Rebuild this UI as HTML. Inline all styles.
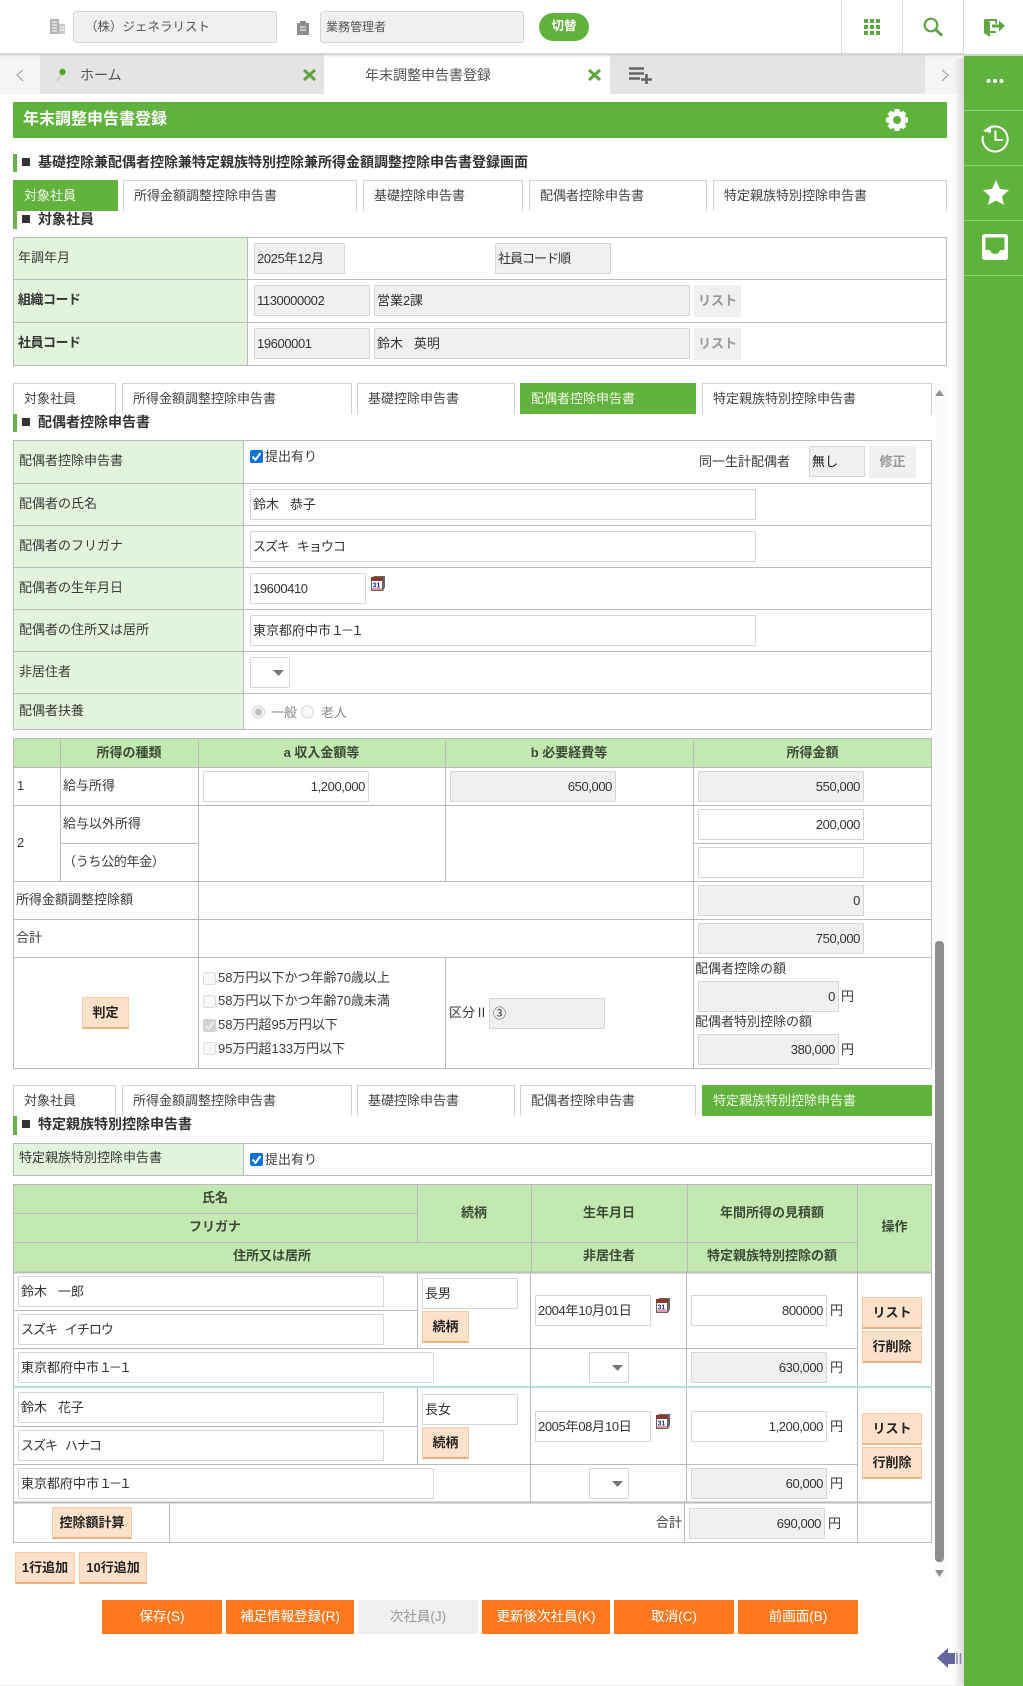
<!DOCTYPE html>
<html lang="ja">
<head>
<meta charset="utf-8">
<title>年末調整申告書登録</title>
<style>
html,body{margin:0;padding:0;background:#fff}
body{position:relative;width:1023px;height:1686px;overflow:hidden;font-family:"Liberation Sans","Noto Sans CJK JP",sans-serif;font-size:13px;color:#3a3a3a}
svg.bg{position:absolute;left:0;top:0}
.t,.i,.b,.tb,.o{position:absolute;white-space:nowrap;box-sizing:border-box}
.t{line-height:20px}
.c{text-align:center}
.h{font-weight:bold;color:#3d4a36}
.s{font-weight:bold;color:#333;font-size:14px}
.k{font-weight:bold;color:#333;letter-spacing:-.5px}
.i{height:31px;line-height:30px;border:1px solid #d6d6d6;background:#fff;padding:0 2px;color:#333;border-radius:1px}
.g{background:#f0f0f0}
.r{text-align:right;padding-right:3px}
.d{font-style:normal;font-size:13px;letter-spacing:-.4px}
.q{letter-spacing:-1px}
.w{letter-spacing:-3px}
.b{height:32px;line-height:29px;text-align:center;background:#fde2c9;border:1px solid #f6cba6;border-bottom:2px solid #f2b27e;font-weight:bold;color:#222}
.x{height:32px;line-height:31px;text-align:center;background:#f0f0f0;font-weight:bold;color:#999}
.tb{height:31px;line-height:29px;border:1px solid #d2d2d2;border-bottom:0;background:#fff;color:#444}
.on{background:#62b33d;color:#f2fbe8;border-color:#62b33d}
.o{top:1600px;height:34px;line-height:33px;text-align:center;background:#ff781e;color:#fff;font-size:13.5px}
.n{background:#f0f0f0;color:#999}
</style>
</head>
<body>
<svg class="bg" width="1023" height="1686" viewBox="0 0 1023 1686" fill="none">
<defs>
<linearGradient id="sh" x1="0" x2="1" y1="0" y2="0"><stop offset="0" stop-color="#d9d9d9" stop-opacity="0"/><stop offset="1" stop-color="#d9d9d9"/></linearGradient>
<linearGradient id="hs" x1="0" x2="0" y1="0" y2="1"><stop offset="0" stop-color="#cfcfcf"/><stop offset="1" stop-color="#cfcfcf" stop-opacity="0"/></linearGradient>
</defs>
<!-- tabs background -->
<rect x="0" y="55" width="40" height="39" fill="#f5f5f5"/>
<rect x="40" y="55" width="284" height="39" fill="#e4e4e4"/>
<rect x="610" y="55" width="315" height="39" fill="#e4e4e4"/>
<rect x="925" y="55" width="39" height="39" fill="#f5f5f5"/>
<rect x="0" y="54" width="964" height="3" fill="url(#hs)"/>
<!-- sidebar -->
<rect x="954" y="58" width="10" height="1628" fill="url(#sh)"/>
<rect x="964" y="55" width="59" height="1631" fill="#5fb23b"/>
<rect x="964" y="54" width="59" height="2" fill="#c9d9c0"/>
<path d="M964 110.5H1023M964 165.5H1023M964 220.5H1023M964 275.5H1023" stroke="#8fcb73"/>
<rect x="0" y="1685" width="964" height="1" fill="#eee"/>
<!-- header lines -->
<path d="M841.5 0V54M902.5 0V54M963.5 0V54" stroke="#d9d9d9"/>
<rect x="0" y="53" width="964" height="1" fill="#d9d9d9"/>
<!-- header icons -->
<g fill="#b5b5b5"><rect x="50" y="19" width="9" height="15"/><rect x="59" y="24" width="6" height="10" fill="#c9c9c9"/></g>
<path d="M52 22h5M52 25h5M52 28h5M52 31h5M60 27h4M60 30h4" stroke="#fff"/>
<path d="M297 23h3v-2h6v2h3v12h-12z" fill="#8d8d8d"/><path d="M300 27h6M300 30h6" stroke="#fff"/>
<g fill="#5fa544"><rect x="864" y="19" width="4" height="4"/><rect x="870" y="19" width="4" height="4"/><rect x="876" y="19" width="4" height="4"/><rect x="864" y="25" width="4" height="4"/><rect x="870" y="25" width="4" height="4"/><rect x="876" y="25" width="4" height="4"/><rect x="864" y="31" width="4" height="4"/><rect x="870" y="31" width="4" height="4"/><rect x="876" y="31" width="4" height="4"/></g>
<circle cx="931" cy="25" r="6.3" stroke="#5fa544" stroke-width="2.2"/><path d="M935.5 29.5L942 35.5" stroke="#5fa544" stroke-width="3"/>
<path d="M984 19L990 22V37L984 33Z" fill="#5fa544"/><path d="M985 19H997V23.5H995V21H987ZM990 31H996V33H990Z" fill="#5fa544"/><path d="M992 24.500H999V20.500L1005 26L999 31.500V27.500H992Z" fill="#5fa544"/>
<!-- tab icons -->
<circle cx="62.500" cy="72" r="3.200" fill="#5aa52a"/><path d="M61 75L57 81" stroke="#c9c9c9" stroke-width="1.500"/>
<path d="M304 70L315 80M315 70L304 80" stroke="#5fa544" stroke-width="3"/>
<path d="M589 70L600 80M600 70L589 80" stroke="#5fa544" stroke-width="3"/>
<path d="M629 68.500H644M629 73.500H644M629 78.500H640" stroke="#666" stroke-width="2.400"/><path d="M641 79.500H652M646.500 74V84" stroke="#666" stroke-width="2.600"/>
<path d="M23 70L17 75L23 81" stroke="#999"/>
<path d="M942 70L948 75L942 81" stroke="#999"/>
<!-- green title -->
<rect x="13" y="102" width="934" height="36" fill="#5fb23b"/>
<g fill="#fff" transform="translate(897 120)"><circle r="6.500" fill="none" stroke="#fff" stroke-width="5"/><g><rect x="-2.500" y="-11" width="5" height="5"/><rect x="-2.500" y="6" width="5" height="5"/><rect x="-11" y="-2.500" width="5" height="5"/><rect x="6" y="-2.500" width="5" height="5"/></g><g transform="rotate(45)"><rect x="-2.500" y="-11" width="5" height="5"/><rect x="-2.500" y="6" width="5" height="5"/><rect x="-11" y="-2.500" width="5" height="5"/><rect x="6" y="-2.500" width="5" height="5"/></g></g>
<!-- sidebar icons -->
<g fill="#fff"><circle cx="988.500" cy="81" r="2"/><circle cx="995" cy="81" r="2"/><circle cx="1001.500" cy="81" r="2"/></g>
<path d="M987 129.500A12.500 12.500 0 1 1 983 136" stroke="#fff" stroke-width="2"/><path d="M983 131L991 125.500V133Z" fill="#fff"/><path d="M995.500 130.500V140H1003" stroke="#fff" stroke-width="2"/>
<path d="M996 180L1000 189L1009 190L1002 196.500L1004 205L996 200.500L988 205L990 196.500L983 190L992 189Z" fill="#fff"/>
<path d="M985 234H1005Q1008 234 1008 237V257Q1008 260 1005 260H985Q982 260 982 257V237Q982 234 985 234ZM985.500 237.500V250H990Q991 254 995 254Q999 254 1000 250H1004.500V237.500Z" fill="#fff" fill-rule="evenodd"/>
<!-- heading bars -->
<g fill="#6db14e"><rect x="13" y="154" width="4" height="18"/><rect x="13" y="211" width="4" height="18"/><rect x="13" y="414" width="4" height="18"/><rect x="13" y="1116" width="4" height="19"/></g>
<g fill="#333"><rect x="22" y="158" width="8" height="8"/><rect x="22" y="215" width="8" height="8"/><rect x="22" y="418" width="8" height="8"/><rect x="22" y="1120" width="8" height="8"/></g>
<!-- fills -->
<g fill="#e2f4dc"><rect x="14" y="238" width="233" height="127"/><rect x="14" y="441" width="229" height="288"/><rect x="14" y="1144" width="229" height="31"/></g>
<g fill="#c2eab0"><rect x="14" y="739" width="918" height="28"/><rect x="14" y="1185" width="918" height="87"/></g>
<!-- grid lines -->
<g stroke="#bbb" shape-rendering="crispEdges">
<path d="M13.500 237.500H946.500V365.500H13.500ZM13 279.500H947M13 322.500H947M247.500 237V365"/>
<path d="M13.500 440.500H931.500V729.500H13.500ZM13 483.500H932M13 525.500H932M13 567.500H932M13 609.500H932M13 651.500H932M13 693.500H932M243.500 440V729"/>
<path d="M13.500 738.500H931.500V1068.500H13.500ZM13 767.500H932M13 805.500H932M60 843.500H198M693 843.500H932M13 881.500H932M13 919.500H932M13 957.500H932M60.500 738V881M198.500 738V1068M445.500 738V881M445.500 957V1068M693.500 738V1068"/>
<path d="M13.500 1143.500H931.500V1175.500H13.500ZM243.500 1143V1175"/>
<path d="M13.500 1184.500H931.500V1542.500H13.500ZM13 1213.500H417M13 1242.500H857M417.500 1184V1242M531.500 1184V1272M687.500 1184V1272M857.500 1184V1542"/>
<path d="M417.500 1273V1348M530.500 1273V1386M686.500 1273V1386M13 1310.500H417M13 1348.500H857"/>
<path d="M417.500 1388V1464M530.500 1388V1502M686.500 1388V1502M13 1426.500H417M13 1464.500H857"/>
<path d="M169.500 1503V1542M684.500 1503V1542"/>
<path d="M13 1272.500H932M13 1502.500H932" stroke-width="2"/>
</g>
<rect x="13" y="1386" width="919" height="2" fill="#b7dfe0"/>
<!-- scrollbar -->
<rect x="935" y="383" width="12" height="1202" fill="#fbfbfb"/>
<path d="M935 396L939.500 390L944 396Z" fill="#8e8e8e"/>
<rect x="935" y="941" width="9" height="621" rx="4" fill="#8e8e8e"/>
<path d="M935 1570H944L939.500 1577Z" fill="#8e8e8e"/>
<!-- back arrow -->
<path d="M937 1658L948 1648V1653H955V1664H948V1668Z" fill="#67679f"/><path d="M957 1653V1664M960.500 1653V1664" stroke="#8a8ab5" stroke-width="1.600"/>
<!-- checkboxes -->
<g>
<rect x="250" y="450" width="13" height="13" rx="2" fill="#0a72d8"/><path d="M252.500 456.500L255.500 459.800L260.500 453" stroke="#fff" stroke-width="2"/>
<rect x="250" y="1153" width="13" height="13" rx="2" fill="#0a72d8"/><path d="M252.500 1159.500L255.500 1162.800L260.500 1156" stroke="#fff" stroke-width="2"/>
<rect x="203.500" y="972.500" width="12" height="12" rx="2" fill="#f7f7f7" stroke="#ddd"/>
<rect x="203.500" y="995.500" width="12" height="12" rx="2" fill="#f7f7f7" stroke="#ddd"/>
<rect x="203" y="1019" width="13" height="13" rx="2" fill="#d2d2d2"/><path d="M205.500 1025.500L208.500 1028.800L213.500 1022" stroke="#eee" stroke-width="2"/>
<rect x="203.500" y="1042.500" width="12" height="12" rx="2" fill="#f7f7f7" stroke="#ddd"/>
<circle cx="258.500" cy="712" r="6" fill="#f3f3f3" stroke="#d4d4d4"/><circle cx="258.500" cy="712" r="3.500" fill="#bdbdbd"/>
<circle cx="307.500" cy="712" r="6" fill="#f8f8f8" stroke="#d4d4d4"/>
</g>
</svg>

<!-- header -->
<div class="i g" style="left:73px;top:11px;width:204px;height:32px;line-height:30px;padding-left:11px;border-radius:3px;color:#555;font-size:12.500px">（株）ジェネラリスト</div>
<div class="i g" style="left:320px;top:11px;width:204px;height:32px;line-height:30px;padding-left:5px;border-radius:3px;color:#555;font-size:12px">業務管理者</div>
<div class="t c" style="left:539px;top:13px;width:50px;height:28px;line-height:26px;background:#5fb23b;border-radius:14px;color:#fff;font-weight:bold;font-size:12.500px">切替</div>

<div class="t" style="left:80px;top:65px;color:#555;font-size:14px">ホーム</div>
<div class="t" style="left:365px;top:65px;color:#555;font-size:14px">年末調整申告書登録</div>

<div class="t" style="left:23px;top:109px;color:#fff;font-size:16px;line-height:22px;font-weight:bold">年末調整申告書登録</div>
<div class="t s" style="left:38px;top:152px">基礎控除兼配偶者控除兼特定親族特別控除兼所得金額調整控除申告書登録画面</div>

<!-- tabs 1 -->
<div class="tb on" style="left:13px;top:180px;width:105px;padding-left:10px">対象社員</div>
<div class="tb" style="left:123px;top:180px;width:234px;padding-left:10px">所得金額調整控除申告書</div>
<div class="tb" style="left:363px;top:180px;width:160px;padding-left:10px">基礎控除申告書</div>
<div class="tb" style="left:529px;top:180px;width:178px;padding-left:10px">配偶者控除申告書</div>
<div class="tb" style="left:713px;top:180px;width:234px;padding-left:10px">特定親族特別控除申告書</div>
<div class="t s" style="left:38px;top:209px">対象社員</div>

<!-- table 1 -->
<div class="t" style="left:18px;top:248px">年調年月</div>
<div class="t k" style="left:18px;top:290px">組織コード</div>
<div class="t k" style="left:18px;top:333px">社員コード</div>
<div class="i g" style="left:254px;top:243px;width:91px;"><i class="d">2025</i>年<i class="d">12</i>月</div>
<div class="i g q" style="left:495px;top:243px;width:116px">社員コード順</div>
<div class="i g" style="left:254px;top:285px;width:116px"><i class="d">1130000002</i></div>
<div class="i g" style="left:374px;top:285px;width:316px">営業<i class="d">2</i>課</div>
<div class="t x" style="left:694px;top:285px;width:47px;">リスト</div>
<div class="i g" style="left:254px;top:328px;width:116px"><i class="d">19600001</i></div>
<div class="i g" style="left:374px;top:328px;width:316px">鈴木&nbsp;&nbsp;&nbsp;英明</div>
<div class="t x" style="left:694px;top:328px;width:47px;">リスト</div>

<!-- tabs 2 -->
<div class="tb" style="left:13px;top:383px;width:103px;padding-left:10px">対象社員</div>
<div class="tb" style="left:122px;top:383px;width:230px;padding-left:10px">所得金額調整控除申告書</div>
<div class="tb" style="left:357px;top:383px;width:158px;padding-left:10px">基礎控除申告書</div>
<div class="tb on" style="left:520px;top:383px;width:176px;padding-left:10px">配偶者控除申告書</div>
<div class="tb" style="left:702px;top:383px;width:230px;padding-left:10px">特定親族特別控除申告書</div>
<div class="t s" style="left:38px;top:412px">配偶者控除申告書</div>

<!-- table 2 -->
<div class="t" style="left:19px;top:451px">配偶者控除申告書</div>
<div class="t" style="left:19px;top:494px">配偶者の氏名</div>
<div class="t" style="left:19px;top:536px">配偶者のフリガナ</div>
<div class="t" style="left:19px;top:578px">配偶者の生年月日</div>
<div class="t" style="left:19px;top:620px">配偶者の住所又は居所</div>
<div class="t" style="left:19px;top:662px">非居住者</div>
<div class="t" style="left:19px;top:701px">配偶者扶養</div>
<div class="t" style="left:265px;top:447px">提出有り</div>
<div class="t" style="left:699px;top:452px">同一生計配偶者</div>
<div class="i g" style="left:809px;top:446px;width:56px;color:#111">無し</div>
<div class="t x" style="left:869px;top:446px;width:47px;">修正</div>
<div class="i" style="left:250px;top:489px;width:506px">鈴木&nbsp;&nbsp;&nbsp;恭子</div>
<div class="i q" style="left:250px;top:531px;width:506px">スズキ&nbsp;&nbsp;&nbsp;キョウコ</div>
<div class="i" style="left:250px;top:573px;width:116px"><i class="d">19600410</i></div>
<svg style="position:absolute;left:371px;top:576px" width="15" height="16" viewBox="0 0 15 16"><path d="M0 3L3 0H14V11L12 15H0Z" fill="#666"/><rect x="0" y="1" width="12" height="4" fill="#8a3a2c"/><rect x="1" y="5" width="10" height="9" fill="#fff"/><text x="1.500" y="11.500" font-size="7" font-weight="bold" fill="#1a2fb0" font-family="Liberation Sans">31</text><rect x="1" y="12.500" width="10" height="1" fill="#d33"/></svg>
<div class="i" style="left:250px;top:615px;width:506px">東京都府中市<span class="w">１－１</span></div>
<div class="i" style="left:250px;top:657px;width:40px"></div>
<svg style="position:absolute;left:273px;top:670px" width="11" height="6"><path d="M0 0H11L5.500 6Z" fill="#777"/></svg>
<div class="t" style="left:271px;top:703px;color:#888">一般</div>
<div class="t" style="left:321px;top:703px;color:#888">老人</div>

<!-- table 3 -->
<div class="t c h" style="left:60px;top:743px;width:138px">所得の種類</div>
<div class="t c h" style="left:198px;top:743px;width:247px">a 収入金額等</div>
<div class="t c h" style="left:445px;top:743px;width:248px">b 必要経費等</div>
<div class="t c h" style="left:693px;top:743px;width:239px">所得金額</div>
<div class="t" style="left:17px;top:776px"><i class="d">1</i></div>
<div class="t" style="left:63px;top:776px">給与所得</div>
<div class="t" style="left:17px;top:833px"><i class="d">2</i></div>
<div class="t" style="left:63px;top:814px">給与以外所得</div>
<div class="t" style="left:63px;top:852px;letter-spacing:-.3px">（うち公的年金）</div>
<div class="t" style="left:16px;top:890px">所得金額調整控除額</div>
<div class="t" style="left:16px;top:928px">合計</div>
<div class="i r" style="left:203px;top:771px;width:166px"><i class="d">1,200,000</i></div>
<div class="i r g" style="left:450px;top:771px;width:166px"><i class="d">650,000</i></div>
<div class="i r g" style="left:698px;top:771px;width:166px"><i class="d">550,000</i></div>
<div class="i r" style="left:698px;top:809px;width:166px"><i class="d">200,000</i></div>
<div class="i r" style="left:698px;top:847px;width:166px"></div>
<div class="i r g" style="left:698px;top:885px;width:166px"><i class="d">0</i></div>
<div class="i r g" style="left:698px;top:923px;width:166px"><i class="d">750,000</i></div>
<div class="b" style="left:82px;top:997px;width:47px">判定</div>
<div class="t" style="left:218px;top:968px">58万円以下かつ年齢70歳以上</div>
<div class="t" style="left:218px;top:991px">58万円以下かつ年齢70歳未満</div>
<div class="t" style="left:218px;top:1015px">58万円超95万円以下</div>
<div class="t" style="left:218px;top:1039px">95万円超133万円以下</div>
<div class="t" style="left:449px;top:1003px">区分Ⅱ</div>
<div class="i g" style="left:489px;top:998px;width:116px;padding-left:3px">③</div>
<div class="t" style="left:695px;top:959px">配偶者控除の額</div>
<div class="i r g" style="left:698px;top:981px;width:141px"><i class="d">0</i></div>
<div class="t" style="left:841px;top:987px">円</div>
<div class="t" style="left:695px;top:1012px">配偶者特別控除の額</div>
<div class="i r g" style="left:698px;top:1034px;width:141px"><i class="d">380,000</i></div>
<div class="t" style="left:841px;top:1040px">円</div>

<!-- tabs 3 -->
<div class="tb" style="left:13px;top:1085px;width:103px;padding-left:10px">対象社員</div>
<div class="tb" style="left:122px;top:1085px;width:230px;padding-left:10px">所得金額調整控除申告書</div>
<div class="tb" style="left:357px;top:1085px;width:158px;padding-left:10px">基礎控除申告書</div>
<div class="tb" style="left:520px;top:1085px;width:176px;padding-left:10px">配偶者控除申告書</div>
<div class="tb on" style="left:702px;top:1085px;width:230px;padding-left:10px">特定親族特別控除申告書</div>
<div class="t s" style="left:38px;top:1114px">特定親族特別控除申告書</div>

<!-- table 4 -->
<div class="t" style="left:19px;top:1148px">特定親族特別控除申告書</div>
<div class="t" style="left:265px;top:1150px">提出有り</div>

<!-- table 5 header -->
<div class="t c h" style="left:13px;top:1188px;width:404px">氏名</div>
<div class="t c h" style="left:13px;top:1217px;width:404px">フリガナ</div>
<div class="t c h" style="left:13px;top:1246px;width:518px">住所又は居所</div>
<div class="t c h" style="left:417px;top:1203px;width:114px">続柄</div>
<div class="t c h" style="left:531px;top:1203px;width:156px">生年月日</div>
<div class="t c h" style="left:531px;top:1246px;width:156px">非居住者</div>
<div class="t c h" style="left:687px;top:1203px;width:170px">年間所得の見積額</div>
<div class="t c h" style="left:687px;top:1246px;width:170px">特定親族特別控除の額</div>
<div class="t c h" style="left:857px;top:1217px;width:75px">操作</div>

<!-- row 1 -->
<div class="i" style="left:18px;top:1276px;width:366px">鈴木&nbsp;&nbsp;&nbsp;一郎</div>
<div class="i q" style="left:18px;top:1314px;width:366px">スズキ&nbsp;&nbsp;&nbsp;イチロウ</div>
<div class="i" style="left:18px;top:1352px;width:416px">東京都府中市<span class="w">１－１</span></div>
<div class="i" style="left:422px;top:1278px;width:96px">長男</div>
<div class="b" style="left:422px;top:1311px;width:47px">続柄</div>
<div class="i" style="left:535px;top:1295px;width:116px"><i class="d">2004</i>年<i class="d">10</i>月<i class="d">01</i>日</div>
<svg style="position:absolute;left:656px;top:1298px" width="15" height="16" viewBox="0 0 15 16"><path d="M0 3L3 0H14V11L12 15H0Z" fill="#666"/><rect x="0" y="1" width="12" height="4" fill="#8a3a2c"/><rect x="1" y="5" width="10" height="9" fill="#fff"/><text x="1.500" y="11.500" font-size="7" font-weight="bold" fill="#1a2fb0" font-family="Liberation Sans">31</text><rect x="1" y="12.500" width="10" height="1" fill="#d33"/></svg>
<div class="i r" style="left:691px;top:1295px;width:136px"><i class="d">800000</i></div>
<div class="t" style="left:830px;top:1301px">円</div>
<div class="i" style="left:589px;top:1352px;width:40px"></div>
<svg style="position:absolute;left:612px;top:1365px" width="11" height="6"><path d="M0 0H11L5.500 6Z" fill="#777"/></svg>
<div class="i r g" style="left:691px;top:1352px;width:136px"><i class="d">630,000</i></div>
<div class="t" style="left:830px;top:1358px">円</div>
<div class="b" style="left:862px;top:1297px;width:60px">リスト</div>
<div class="b" style="left:862px;top:1331px;width:60px">行削除</div>

<!-- row 2 -->
<div class="i" style="left:18px;top:1392px;width:366px">鈴木&nbsp;&nbsp;&nbsp;花子</div>
<div class="i q" style="left:18px;top:1430px;width:366px">スズキ&nbsp;&nbsp;&nbsp;ハナコ</div>
<div class="i" style="left:18px;top:1468px;width:416px">東京都府中市<span class="w">１－１</span></div>
<div class="i" style="left:422px;top:1394px;width:96px">長女</div>
<div class="b" style="left:422px;top:1427px;width:47px">続柄</div>
<div class="i" style="left:535px;top:1411px;width:116px"><i class="d">2005</i>年<i class="d">08</i>月<i class="d">10</i>日</div>
<svg style="position:absolute;left:656px;top:1414px" width="15" height="16" viewBox="0 0 15 16"><path d="M0 3L3 0H14V11L12 15H0Z" fill="#666"/><rect x="0" y="1" width="12" height="4" fill="#8a3a2c"/><rect x="1" y="5" width="10" height="9" fill="#fff"/><text x="1.500" y="11.500" font-size="7" font-weight="bold" fill="#1a2fb0" font-family="Liberation Sans">31</text><rect x="1" y="12.500" width="10" height="1" fill="#d33"/></svg>
<div class="i r" style="left:691px;top:1411px;width:136px"><i class="d">1,200,000</i></div>
<div class="t" style="left:830px;top:1417px">円</div>
<div class="i" style="left:589px;top:1468px;width:40px"></div>
<svg style="position:absolute;left:612px;top:1481px" width="11" height="6"><path d="M0 0H11L5.500 6Z" fill="#777"/></svg>
<div class="i r g" style="left:691px;top:1468px;width:136px"><i class="d">60,000</i></div>
<div class="t" style="left:830px;top:1474px">円</div>
<div class="b" style="left:862px;top:1413px;width:60px">リスト</div>
<div class="b" style="left:862px;top:1447px;width:60px">行削除</div>

<!-- row 3 -->
<div class="b" style="left:52px;top:1507px;width:80px">控除額計算</div>
<div class="t" style="left:656px;top:1513px">合計</div>
<div class="i r g" style="left:689px;top:1508px;width:136px"><i class="d">690,000</i></div>
<div class="t" style="left:828px;top:1514px">円</div>

<div class="b" style="left:15px;top:1552px;width:60px">1行追加</div>
<div class="b" style="left:79px;top:1552px;width:68px">10行追加</div>

<div class="o" style="left:102px;width:120px">保存(S)</div>
<div class="o" style="left:226px;width:128px">補足情報登録(R)</div>
<div class="o n" style="left:358px;width:120px">次社員(J)</div>
<div class="o" style="left:482px;width:128px">更新後次社員(K)</div>
<div class="o" style="left:614px;width:120px">取消(C)</div>
<div class="o" style="left:738px;width:120px">前画面(B)</div>
</body>
</html>
